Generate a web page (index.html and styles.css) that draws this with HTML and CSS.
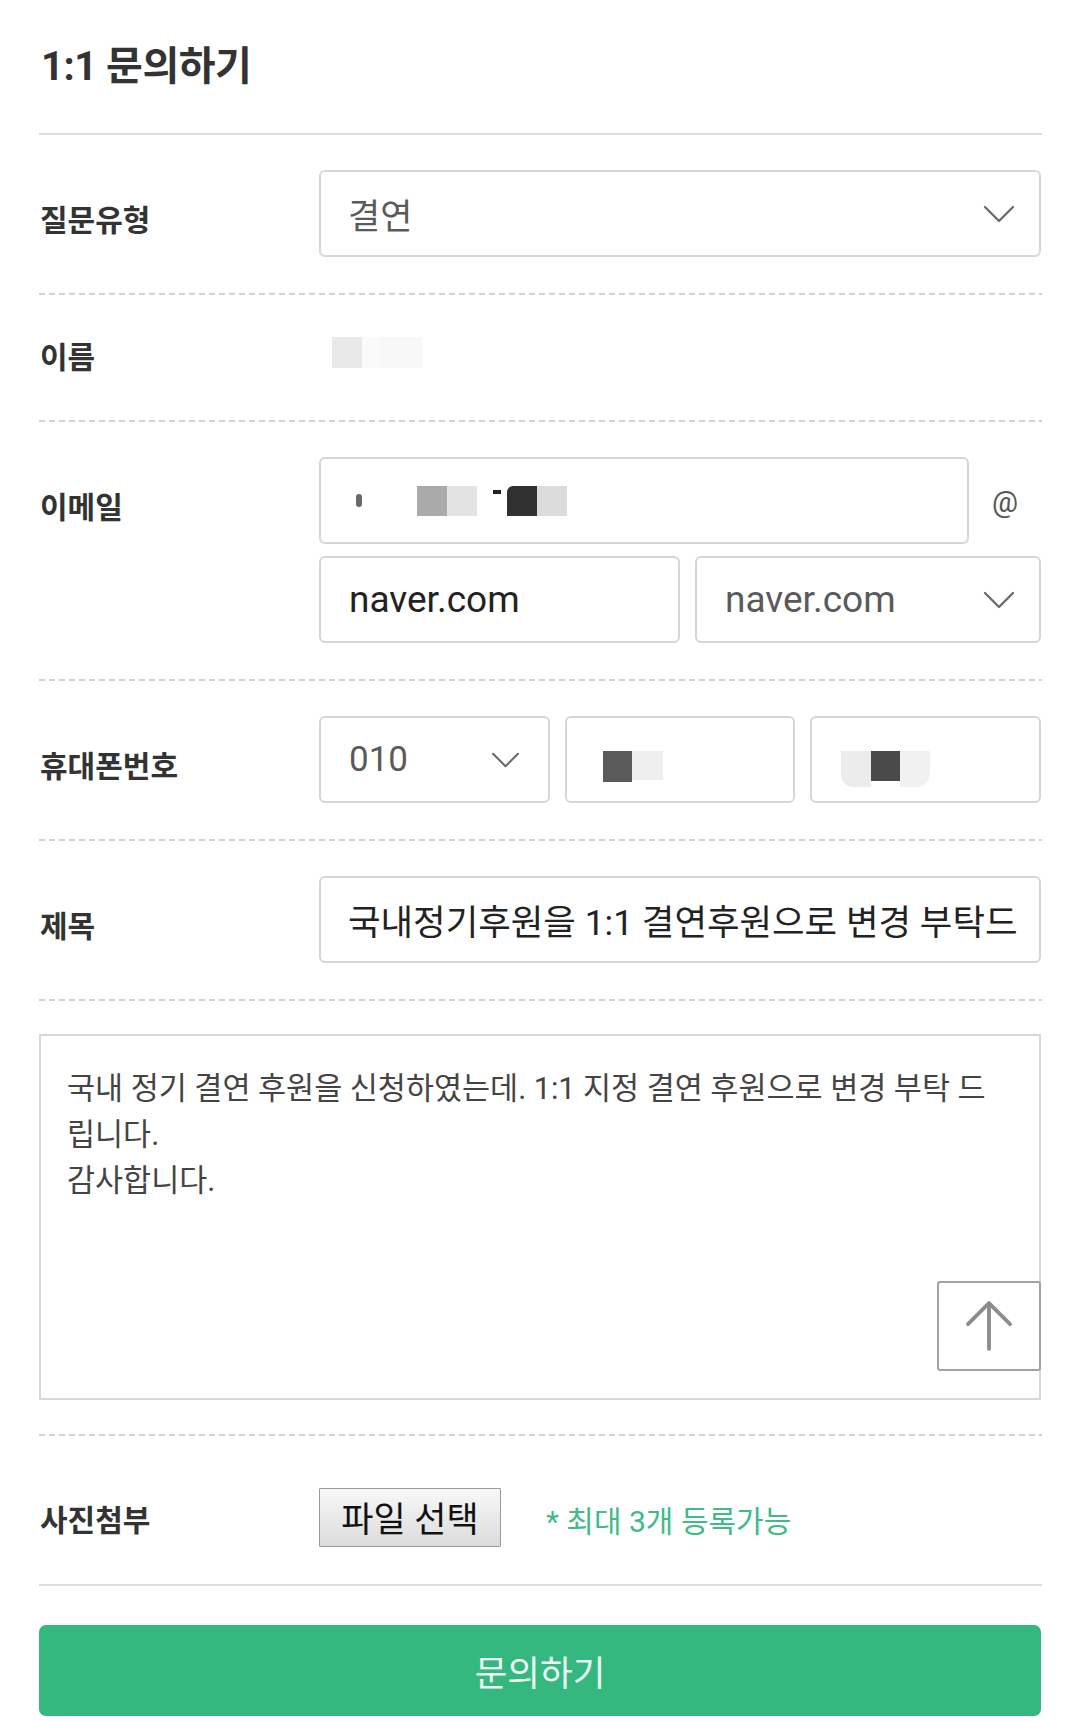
FILE: index.html
```html
<!DOCTYPE html>
<html lang="ko">
<head>
<meta charset="utf-8">
<title>1:1 문의하기</title>
<link rel="stylesheet" href="styles.css">
</head>
<body>
<main class="page">
  <h1 class="title">1:1 문의하기</h1>
  <div class="rule"></div>

  <div class="row">
    <div class="label">질문유형</div>
    <div class="field">
      <div class="box select muted">
        <span>결연</span>
        <svg class="chev" viewBox="0 0 32 18" width="32" height="18"><polyline points="2,2 16,16 30,2"/></svg>
      </div>
    </div>
  </div>

  <div class="row row-name">
    <div class="label label-plain">이름</div>
    <div class="field">
      <div class="blur-name">
        <span class="bn bn1"></span><span class="bn bn2"></span><span class="bn bn3"></span>
      </div>
    </div>
  </div>

  <div class="row">
    <div class="label">이메일</div>
    <div class="field email">
      <div class="email-top">
        <div class="box">
          <div class="blur-email">
            <span class="be be-mark"></span>
            <span class="be be-gray"></span><span class="be be-light"></span>
            <span class="be be-tick"></span>
            <span class="be be-dark"></span><span class="be be-light2"></span>
          </div>
        </div>
        <span class="at">@</span>
      </div>
      <div class="email-bottom">
        <div class="box dark latin"><span>naver.com</span></div>
        <div class="box select muted latin">
          <span>naver.com</span>
          <svg class="chev" viewBox="0 0 32 18" width="32" height="18"><polyline points="2,2 16,16 30,2"/></svg>
        </div>
      </div>
    </div>
  </div>

  <div class="row">
    <div class="label">휴대폰번호</div>
    <div class="field phone">
      <div class="box select muted digits">
        <span>010</span>
        <svg class="chev chev-sm" viewBox="0 0 32 18" width="29" height="16"><polyline points="2,2 16,16 30,2"/></svg>
      </div>
      <div class="box">
        <div class="blur-phone">
          <span class="bp-dark"></span><span class="bp-light"></span>
        </div>
      </div>
      <div class="box">
        <div class="blur-phone blur-phone2">
          <span class="bp-light bp-left"></span><span class="bp-dark"></span><span class="bp-light bp-right"></span>
        </div>
      </div>
    </div>
  </div>

  <div class="row">
    <div class="label">제목</div>
    <div class="field">
      <div class="box dark subject"><span>국내정기후원을 1:1 결연후원으로 변경 부탁드</span></div>
    </div>
  </div>

  <div class="row row-body">
    <div class="textarea">
      <p>국내 정기 결연 후원을 신청하였는데. 1:1 지정 결연 후원으로 변경 부탁 드<br>립니다.<br>감사합니다.</p>
      <button class="to-top" type="button" aria-label="위로">
        <svg viewBox="0 0 104 90" width="100" height="86"><path d="M52 21 V69 M30 43 L52 21 L74 43"/></svg>
      </button>
    </div>
  </div>

  <div class="row row-photo">
    <div class="label label-plain">사진첨부</div>
    <div class="field photo">
      <button class="file-btn" type="button">파일 선택</button>
      <span class="hint">* 최대 3개 등록가능</span>
    </div>
  </div>
  <div class="rule"></div>

  <button class="submit" type="button">문의하기</button>
</main>
</body>
</html>
```

FILE: styles.css
```css
* { box-sizing: border-box; }

html, body {
  margin: 0;
  padding: 0;
  background: #fff;
}

body {
  font-family: Roboto, "Noto Sans CJK KR", sans-serif;
  color: #333;
}

.page {
  width: 1003px;
  margin-left: 39px;
}

.title {
  margin: 0;
  padding: 41px 0 41px 2px;
  font-size: 40px;
  line-height: 51px;
  font-weight: 700;
  color: #333;
  letter-spacing: -0.5px;
}

.rule {
  height: 2px;
  background: #dcdcdc;
}

.row {
  display: flex;
  align-items: flex-start;
  padding: 35px 0 38px;
  background: repeating-linear-gradient(90deg, #d2d2d2 0 6px, transparent 6px 10px) left bottom / 100% 2px no-repeat;
}

.label {
  flex: 0 0 280px;
  padding: 14px 0 0 1px;
  line-height: 73px;
  font-size: 30px;
  font-weight: 700;
  color: #333;
}

.label-plain {
  padding-top: 2px;
  line-height: 52px;
}

.field {
  flex: 1 1 auto;
  min-width: 0;
  margin-right: 1px;
}

.box {
  display: flex;
  align-items: center;
  height: 87px;
  padding: 0 24px 0 27px;
  border: 2px solid #d6d6d6;
  border-radius: 6px;
  background: #fff;
  font-size: 35px;
  color: #222;
  overflow: hidden;
  white-space: nowrap;
}

.box.muted { color: #5a5a5a; }
.box.dark { color: #222; }
.box.latin { font-size: 37px; padding-left: 28px; }
.box.digits { font-size: 35px; }
.box.subject { font-size: 35.4px; }

.select {
  justify-content: space-between;
}

.chev {
  flex: none;
  fill: none;
  stroke: #6a6a6a;
  stroke-width: 2.3;
  stroke-linecap: round;
  stroke-linejoin: round;
}

/* name (blurred) */
.row-name .field {
  height: 54px;
  display: flex;
  align-items: center;
}

.blur-name {
  display: flex;
  align-items: flex-start;
  margin-left: 13px;
  margin-top: -10px;
}

.bn { display: block; height: 31px; }
.bn1 { width: 30px; background: #e9e9e9; }
.bn2 { width: 18px; background: #fafafa; }
.bn3 { width: 42px; background: #f8f8f8; }

/* email */
.email-top {
  display: flex;
  align-items: center;
}

.email-top .box {
  flex: 0 0 650px;
}

.at {
  flex: 1;
  text-align: center;
  font-size: 29px;
  color: #555;
  padding-top: 2px;
}

.email-bottom {
  display: grid;
  grid-template-columns: 361px 1fr;
  gap: 15px;
  margin-top: 12px;
}

.blur-email {
  display: flex;
  align-items: center;
  height: 30px;
  margin-left: 8px;
}

.be { display: block; }
.be-mark { width: 6px; height: 13px; background: #444; border-radius: 3px; margin-right: 55px; opacity: 0.8; }
.be-gray { width: 30px; height: 30px; background: #aaa; }
.be-light { width: 30px; height: 30px; background: #e3e3e3; margin-right: 16px; }
.be-tick { width: 8px; height: 4px; background: #222; margin-right: 6px; align-self: flex-start; margin-top: 4px; }
.be-dark { width: 30px; height: 30px; background: #303030; border-top-left-radius: 6px; }
.be-light2 { width: 30px; height: 30px; background: #dcdcdc; }

/* phone */
.phone {
  display: grid;
  grid-template-columns: repeat(3, 1fr);
  gap: 15px;
}

.phone .box {
  padding-left: 28px;
}

.chev-sm { margin-right: 4px; }

.blur-phone {
  display: flex;
  align-items: flex-start;
  height: 44px;
  margin-top: 26px;
  margin-left: 8px;
}

.bp-dark { display: block; width: 29px; height: 31px; background: #5a5a5a; }
.bp-light { display: block; width: 31px; height: 29px; background: #efefef; }

.blur-phone2 { margin-left: 1px; }
.blur-phone2 .bp-dark { background: #4a4a4a; height: 30px; }
.bp-left { width: 30px; height: 36px; background: #ececec; border-bottom-left-radius: 12px; }
.bp-right { width: 30px; height: 36px; background: #f1f1f1; border-bottom-right-radius: 14px; }

/* body text */
.row-body {
  display: block;
  padding: 33px 0 36px;
}

.textarea {
  position: relative;
  height: 366px;
  margin-right: 1px;
  border: 2px solid #d8d8d8;
  padding: 30px 26px;
}

.textarea p {
  margin: 0;
  font-size: 30.5px;
  line-height: 46px;
  color: #444;
  white-space: nowrap;
}

.to-top {
  position: absolute;
  right: -2px;
  bottom: 27px;
  width: 104px;
  height: 90px;
  padding: 0;
  border: 2px solid #a2a2a2;
  border-radius: 3px;
  background: #fff;
  display: flex;
  align-items: center;
  justify-content: center;
}

.to-top svg {
  fill: none;
  stroke: #8c8c8c;
  stroke-width: 4;
  stroke-linecap: round;
  stroke-linejoin: round;
}

/* photo */
.row-photo {
  align-items: center;
  padding: 47px 0 29px;
  background: none;
}

.row-photo .label {
  line-height: 68px;
  padding-top: 4px;
}

.photo {
  display: flex;
  align-items: center;
  gap: 45px;
  height: 68px;
}

.file-btn {
  width: 182px;
  height: 59px;
  margin-top: -4px;
  padding: 0 0 2px;
  border: 1px solid #9a9a9a;
  border-radius: 1px;
  background: linear-gradient(#f8f8f8, #dcdcdc);
  font-family: Roboto, "Noto Sans CJK KR", sans-serif;
  font-size: 35px;
  color: #111;
}

.hint {
  font-size: 30px;
  color: #3fba88;
}

/* submit */
.submit {
  display: block;
  width: 1002px;
  height: 91px;
  margin-top: 39px;
  border: 0;
  border-radius: 7px;
  background: #35b87f;
  font-family: Roboto, "Noto Sans CJK KR", sans-serif;
  font-size: 35.5px;
  color: #ecfbf4;
}
```
